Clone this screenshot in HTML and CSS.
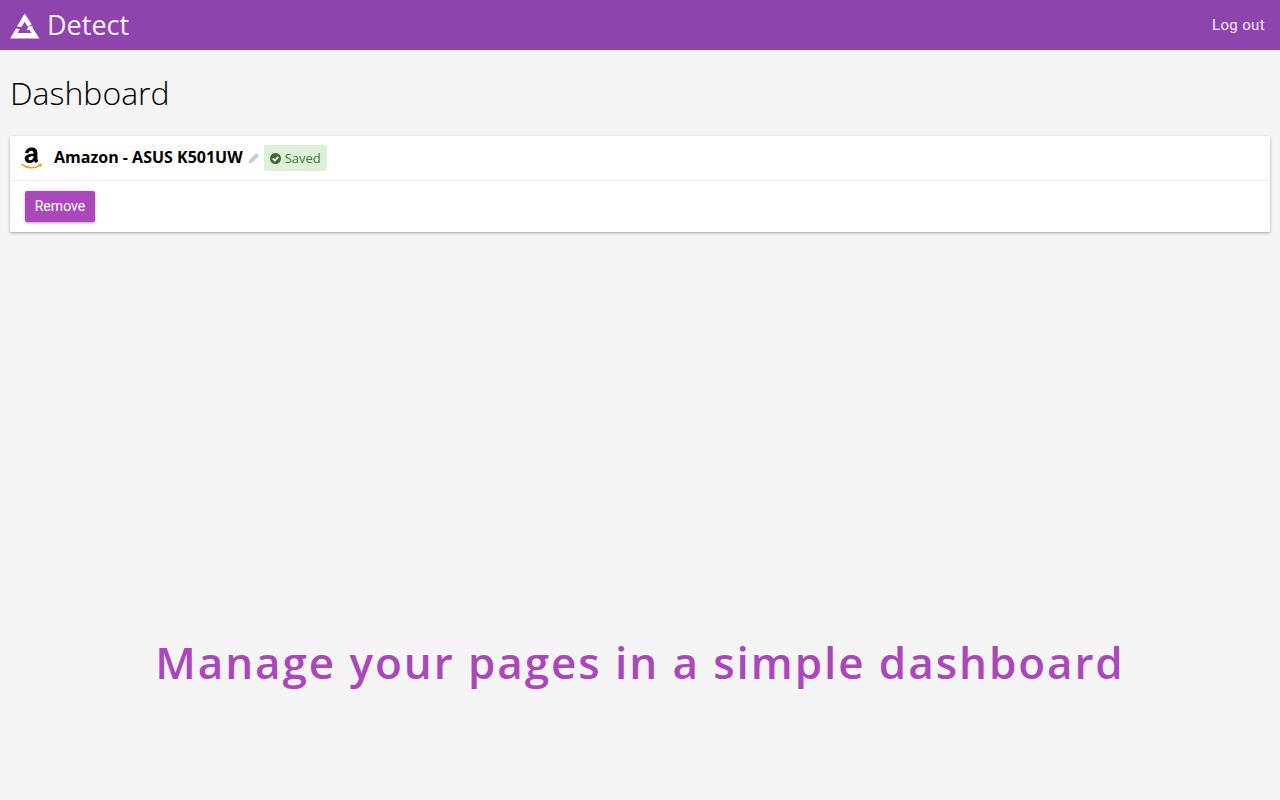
FILE: index.html
```
<!DOCTYPE html>
<html lang="en">
<head>
<meta charset="utf-8">
<title>Detect - Dashboard</title>
<link rel="stylesheet" href="styles.css">
</head>
<body>
<header class="navbar">
  <a class="brand" href="#">
    <svg class="brand-logo" width="30" height="26" viewBox="0 0 30 26" aria-hidden="true">
      <path fill="#fff" d="M14.6 0.5 L21.8 11.6 L17.6 13.4 L14.6 8.8 L11.6 14 L7 13.6 Z"/>
      <path fill="#fff" d="M6 15.4 L9.8 15.9 L7.6 20 L21.4 20 L19.2 16.4 L16.6 17.6 L18.8 12.9 L23.4 13.6 L22.2 14.3 L29.4 25.6 L0.2 25.6 Z"/>
    </svg>
    <span class="brand-name">Detect</span>
  </a>
  <a class="logout" href="#">Log out</a>
</header>
<main class="content">
  <h1 class="page-title">Dashboard</h1>
  <section class="card">
    <div class="card-head">
      <svg class="amazon" width="22" height="24" viewBox="0 0 22 24" aria-hidden="true">
        <path fill="#000" fill-rule="evenodd" d="M12.6 8.2 C12.6 5.6 11.6 4.6 9.6 4.9 C8.2 5.1 7.6 6 7.4 7.2 L4.2 6.9 C4.7 3.2 7.6 1.6 10.6 1.6 C14.4 1.6 16.4 3.6 16.4 7 L16.4 12.6 C16.4 13.6 16.8 14.2 17.4 14.9 L14.9 17.1 C14 16.4 13.5 15.7 13 14.9 C11.8 16.3 10.6 17.1 8.6 17.1 C5.8 17.1 3.7 15.3 3.7 12.6 C3.7 9.1 7.4 7.9 12.6 7.5 Z M12.6 10 C9.6 10.2 7.5 10.7 7.5 12.4 C7.5 13.6 8.2 14.3 9.3 14.3 C11.4 14.3 12.6 12.4 12.6 10 Z"/>
        <path fill="none" stroke="#f39c12" stroke-width="1.6" stroke-linecap="round" d="M1 18.6 C6.5 22.8 14 22.8 19.2 19.1"/>
        <path fill="#f39c12" d="M17 18 L20.8 17.6 L20.2 21.2 Z"/>
      </svg>
      <span class="page-name">Amazon - ASUS K501UW</span>
      <svg class="pencil" width="12" height="12" viewBox="0 0 12 12" aria-hidden="true">
        <path fill="#ccc" d="M8.3 0.9 L11.1 3.7 L4 10.8 L0.6 11.4 L1.2 8 Z"/>
      </svg>
      <span class="badge">
        <svg class="check" width="11" height="11" viewBox="0 0 11 11" aria-hidden="true">
          <circle cx="5.5" cy="5.5" r="5.5" fill="#3c6b35"/>
          <path fill="none" stroke="#fff" stroke-width="1.7" d="M2.8 5.6 L4.8 7.6 L8.3 3.9"/>
        </svg>
        Saved
      </span>
    </div>
    <div class="card-body">
      <button class="btn" type="button">Remove</button>
    </div>
  </section>
</main>
<p class="tagline">Manage your pages in a simple dashboard</p>
</body>
</html>
```
FILE: styles.css
```
* { box-sizing: border-box; }
html, body { margin: 0; height: 100%; }
body {
  height: 800px;
  overflow: hidden;
  background: #f5f5f5;
  font-family: "Open Sans", sans-serif;
  color: #000;
  display: flex;
  flex-direction: column;
}
.navbar {
  height: 50px;
  flex: none;
  background: #8e44ad;
  display: flex;
  align-items: center;
  justify-content: space-between;
  padding: 0 15px 0 10px;
}
.brand { display: flex; align-items: center; gap: 7px; text-decoration: none; }
.brand-logo { display: block; margin-top: 1px; }
.brand-name { font-size: 27px; font-weight: 400; color: #f6eefa; line-height: 50px; }
.logout { font-family: Roboto, sans-serif; font-size: 15px; font-weight: 450; letter-spacing: 0.35px; color: #f3e9f7; text-decoration: none; }
.content { padding: 0 10px; flex: none; }
.page-title {
  margin: 21px 0 21px;
  font-size: 32px;
  line-height: 44px;
  font-weight: 300;
  color: #000;
}
.card {
  background: #fff;
  border-radius: 2px;
  box-shadow: 0 1px 3px rgba(0, 0, 0, 0.35);
}
.card-head {
  height: 45px;
  border-bottom: 1px solid #eee;
  display: flex;
  align-items: center;
  padding: 0 10px;
}
.amazon { flex: none; margin: 0 11px 0 1px; }
.page-name { font-size: 16px; font-weight: 700; margin-bottom: 2px; }
.pencil { margin: 0 4px 0 5px; flex: none; }
.badge {
  display: flex;
  align-items: center;
  gap: 4px;
  height: 26px;
  padding: 0 6px;
  background: #dff0d8;
  border-radius: 2px;
  color: #3c763d;
  font-size: 13px;
}
.card-body { padding: 10px 15px; }
.btn {
  display: block;
  width: 70px;
  height: 31px;
  border: 0;
  padding: 0 0 1px;
  border-radius: 2px;
  background: #ab47bc;
  color: #fff;
  font-family: Roboto, sans-serif;
  font-size: 14px;
  font-weight: 450;
  letter-spacing: 0.05px;
  box-shadow: 0 1px 3px rgba(0, 0, 0, 0.35);
}
.tagline {
  margin: 397px 0 0;
  text-align: center;
  font-family: "Open Sans", sans-serif;
  font-size: 44px;
  line-height: 66px;
  font-weight: 600;
  letter-spacing: 1.93px;
  color: #ab47bc;
}
```
